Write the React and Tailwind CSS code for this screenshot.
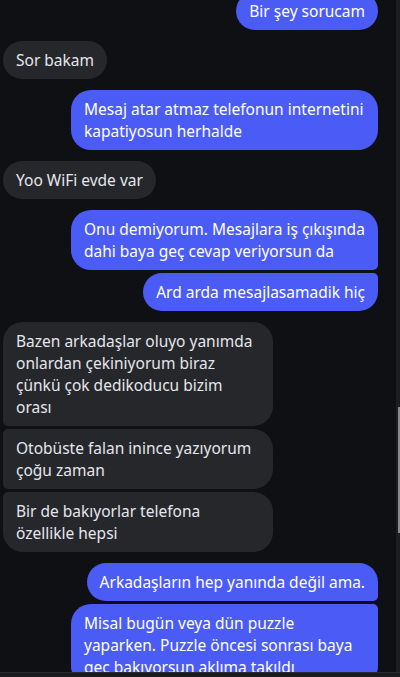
import React from 'react';

const messages = [
  { id: 1, me: true, lines: ['Bir şey sorucam'], pos: 'single' },
  { id: 2, me: false, lines: ['Sor bakam'], pos: 'single' },
  { id: 3, me: true, lines: ['Mesaj atar atmaz telefonun internetini', 'kapatiyosun herhalde'], pos: 'single', wide: true },
  { id: 4, me: false, lines: ['Yoo WiFi evde var'], pos: 'single' },
  { id: 5, me: true, lines: ['Onu demiyorum. Mesajlara iş çıkışında', 'dahi baya geç cevap veriyorsun da'], pos: 'first', wide: true },
  { id: 6, me: true, lines: ['Ard arda mesajlasamadik hiç'], pos: 'last' },
  { id: 7, me: false, lines: ['Bazen arkadaşlar oluyo yanımda', 'onlardan çekiniyorum biraz', 'çünkü çok dedikoducu bizim', 'orası'], pos: 'first', wide: true },
  { id: 8, me: false, lines: ['Otobüste falan inince yazıyorum', 'çoğu zaman'], pos: 'middle', wide: true },
  { id: 9, me: false, lines: ['Bir de bakıyorlar telefona', 'özellikle hepsi'], pos: 'last', wide: true },
  { id: 10, me: true, lines: ['Arkadaşların hep yanında değil ama.'], pos: 'first' },
  { id: 11, me: true, lines: ['Misal bugün veya dün puzzle', 'yaparken. Puzzle öncesi sonrası baya', 'geç bakıyorsun aklıma takıldı'], pos: 'last', wide: true },
];

const cornerClass = {
  me: {
    single: 'rounded-[20px]',
    first: 'rounded-[20px] rounded-br-[5px]',
    middle: 'rounded-[20px] rounded-r-[5px]',
    last: 'rounded-[20px] rounded-tr-[5px]',
  },
  them: {
    single: 'rounded-[20px]',
    first: 'rounded-[20px] rounded-bl-[5px]',
    middle: 'rounded-[20px] rounded-l-[5px]',
    last: 'rounded-[20px] rounded-tl-[5px]',
  },
};

function Bubble({ msg }) {
  const side = msg.me ? 'me' : 'them';
  const width = msg.wide ? (msg.me ? 'w-[307px]' : 'w-[270px]') : '';
  const color = msg.me ? 'bg-[#4b5cf6] text-white' : 'bg-[#26272b] text-[#e4e6eb]';
  return (
    <div className={`flex ${msg.me ? 'justify-end' : 'justify-start'}`}>
      <div className={`${width} ${color} ${cornerClass[side][msg.pos]} px-[13px] py-2 text-[15.5px] leading-[22px]`}>
        {msg.lines.map((line, i) => (
          <div key={i} className="whitespace-nowrap">{line}</div>
        ))}
      </div>
    </div>
  );
}

export default function App() {
  return (
    <div
      className="w-[400px] h-[677px] bg-[#0e1014] flex flex-col overflow-hidden"
      style={{ fontFamily: '"Noto Sans", "Open Sans", sans-serif' }}
    >
      <div className="flex h-[672px]">
        <div className="flex-1 overflow-hidden pl-[3px] pr-[18px]">
          <div className="-mt-[8px] flex flex-col">
            {messages.map((msg, i) => {
              const prev = messages[i - 1];
              const gap = !prev ? '' : prev.me === msg.me ? 'mt-[3px]' : 'mt-[11px]';
              return (
                <div key={msg.id} className={gap}>
                  <Bubble msg={msg} />
                </div>
              );
            })}
          </div>
        </div>
        {/* scrollbar */}
        <div className="w-[4px] bg-[#1c1d20] flex flex-col">
          <div className="h-[407px]" />
          <div className="h-[126px] ml-[2px] w-[2px] bg-[#8a8a8a]" />
        </div>
      </div>
      <div className="h-[5px] bg-[#1a1b1e] border-t border-[#2a2b2e]" />
    </div>
  );
}
